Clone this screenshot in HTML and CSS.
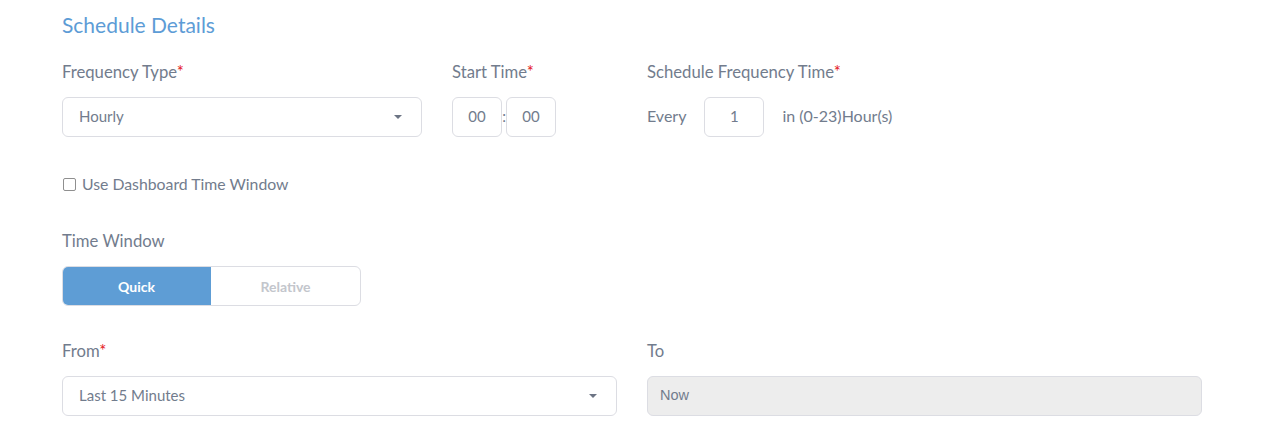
FILE: index.html
```html
<!DOCTYPE html>
<html>
<head>
<meta charset="utf-8">
<link rel="stylesheet" href="styles.css">
</head>
<body>
<div class="page">
  <h2 class="title">Schedule Details</h2>

  <div class="row row-top">
    <div class="field">
      <div class="label">Frequency Type<span class="req">*</span></div>
      <div class="select w-freq">
        <span class="value">Hourly</span>
        <span class="caret"></span>
      </div>
    </div>
    <div class="field">
      <div class="label">Start Time<span class="req">*</span></div>
      <div class="time">
        <div class="box box-time">00</div>
        <span class="colon">:</span>
        <div class="box box-time">00</div>
      </div>
    </div>
    <div class="field">
      <div class="label">Schedule Frequency Time<span class="req">*</span></div>
      <div class="every">
        <span class="text">Every</span>
        <div class="box box-every">1</div>
        <span class="text">in (0-23)Hour(s)</span>
      </div>
    </div>
  </div>

  <label class="check-row">
    <span class="checkbox"></span>
    <span class="check-text">Use Dashboard Time Window</span>
  </label>

  <div class="field tw">
    <div class="label">Time Window</div>
    <div class="toggle">
      <div class="seg seg-active">Quick</div>
      <div class="seg">Relative</div>
    </div>
  </div>

  <div class="row row-bottom">
    <div class="field">
      <div class="label">From<span class="req">*</span></div>
      <div class="select">
        <span class="value">Last 15 Minutes</span>
        <span class="caret"></span>
      </div>
    </div>
    <div class="field">
      <div class="label">To</div>
      <div class="select disabled">
        <span class="value now">Now</span>
      </div>
    </div>
  </div>
</div>
</body>
</html>
```

FILE: styles.css
```css
html, body {
  margin: 0;
  padding: 0;
  background: #ffffff;
}

body {
  font-family: Lato, "Open Sans", sans-serif;
  color: #717b8c;
}

.page {
  padding: 10px 59px 0 62px;
}

.title {
  margin: 0;
  font-size: 21px;
  line-height: 30px;
  font-weight: 400;
  color: #5d9cd6;
}

.row {
  display: grid;
  column-gap: 30px;
}

.row-top {
  margin-top: 22px;
  grid-template-columns: 360px 165px auto;
}

.row-bottom {
  margin-top: 35px;
  grid-template-columns: 555px 555px;
}

.field {
  display: flex;
  flex-direction: column;
  gap: 15px;
}

.label {
  font-size: 16.7px;
  line-height: 20px;
  color: #727c8d;
}

.req {
  color: #e4151b;
}

.select {
  height: 40px;
  box-sizing: border-box;
  border: 1px solid #dcdde3;
  border-radius: 6px;
  display: flex;
  align-items: center;
  justify-content: space-between;
  padding: 0 19px 2px 16px;
  background: #fff;
}

.value {
  font-size: 15px;
  color: #727c8d;
}

.caret {
  width: 0;
  height: 0;
  margin-top: 2px;
  border-left: 4.5px solid transparent;
  border-right: 4.5px solid transparent;
  border-top: 4.5px solid #6c7484;
}

.select.disabled {
  background: #ededed;
  padding-left: 12px;
}

.now {
  font-family: "Liberation Sans", Arial, sans-serif;
  font-size: 14.5px;
}

.time,
.every {
  display: flex;
  align-items: center;
  height: 40px;
}

.every .text {
  font-size: 16px;
  color: #727c8d;
  margin-top: -3px;
}

.box {
  height: 40px;
  box-sizing: border-box;
  border: 1px solid #dcdde3;
  border-radius: 6px;
  display: flex;
  align-items: center;
  justify-content: center;
  padding-bottom: 2px;
  font-size: 15px;
  color: #727c8d;
}

.box-time {
  width: 50px;
}

.colon {
  width: 4px;
  text-align: center;
  font-size: 15px;
  color: #727c8d;
  margin-top: -2px;
}

.box-every {
  width: 60px;
  margin: 0 18px 0 18px;
}

.check-row {
  margin-top: 37px;
  display: flex;
  align-items: center;
  gap: 6px;
  height: 20px;
  padding-left: 1px;
}

.checkbox {
  width: 11px;
  height: 11px;
  border: 1px solid #8f8f8f;
  border-radius: 2px;
  background: #fff;
  margin-top: 1px;
}

.check-text {
  font-size: 15.8px;
  color: #727c8d;
  margin-top: -2px;
}

.tw {
  margin-top: 37px;
}

.toggle {
  display: flex;
  width: 299px;
  height: 40px;
  box-sizing: border-box;
  border: 1px solid #dcdde3;
  border-radius: 6px;
  overflow: hidden;
}

.seg {
  flex: 1;
  display: flex;
  align-items: center;
  justify-content: center;
  font-size: 14px;
  font-weight: 700;
  color: #c3c6cc;
}

.seg-active {
  background: #5e9dd5;
  color: #ffffff;
  margin: -1px 0 -1px -1px;
}
```
